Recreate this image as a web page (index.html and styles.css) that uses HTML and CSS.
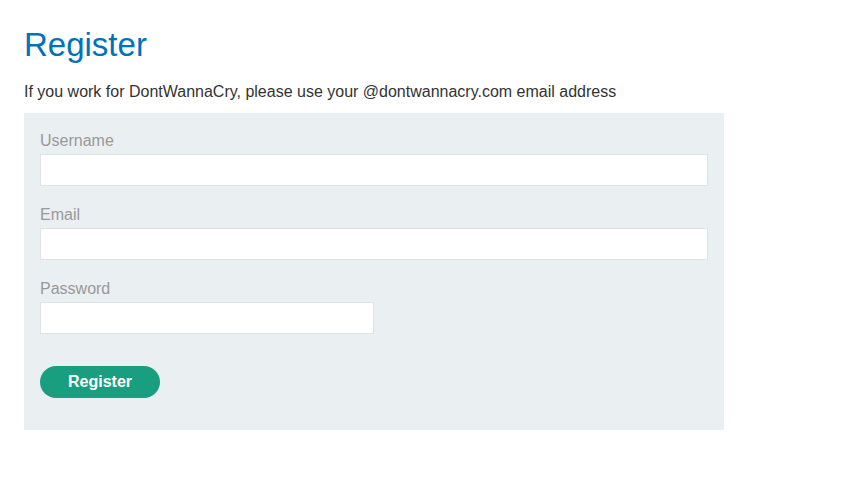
FILE: index.html
```html
<!DOCTYPE html>
<html>
<head>
<meta charset="utf-8">
<link rel="stylesheet" href="styles.css">
</head>
<body>
<div class="page">
  <h1 class="title">Register</h1>
  <p class="note">If you work for DontWannaCry, please use your @dontwannacry.com email address</p>
  <form class="form">
    <label class="label">Username</label>
    <input class="input" type="text">
    <label class="label">Email</label>
    <input class="input" type="text">
    <label class="label">Password</label>
    <input class="input input-half" type="password">
    <button class="btn" type="button">Register</button>
  </form>
</div>
</body>
</html>
```
FILE: styles.css
```css
* { box-sizing: border-box; }
body {
  margin: 0;
  background: #fff;
  font-family: "Liberation Sans", Arial, sans-serif;
  color: #333332;
}
.page {
  padding: 24px 24px 0 24px;
}
.title {
  margin: 0;
  font-size: 33px;
  font-weight: normal;
  color: #0071bc;
  line-height: 42px;
}
.note {
  margin: 14px 0 0 0;
  font-size: 16px;
  line-height: 24px;
}
.form {
  width: 700px;
  margin-top: 9px;
  background: #eaeff2;
  padding: 16px 16px 32px 16px;
  display: flex;
  flex-direction: column;
  align-items: flex-start;
}
.label {
  font-size: 16px;
  line-height: 24px;
  color: #999;
  margin-bottom: 1px;
}
.input {
  width: 668px;
  height: 32px;
  border: 1px solid #dde2e4;
  background: #fff;
  margin: 0 0 17px 0;
  padding: 0 8px;
  font-size: 16px;
  outline: none;
}
.input-half {
  width: 334px;
  margin-bottom: 32px;
}
.btn {
  width: 120px;
  height: 32px;
  border: none;
  border-radius: 16px;
  background: #1a9e80;
  color: #fff;
  font-family: "Liberation Sans", Arial, sans-serif;
  font-weight: bold;
  font-size: 16px;
  padding: 0;
  cursor: pointer;
}
```
